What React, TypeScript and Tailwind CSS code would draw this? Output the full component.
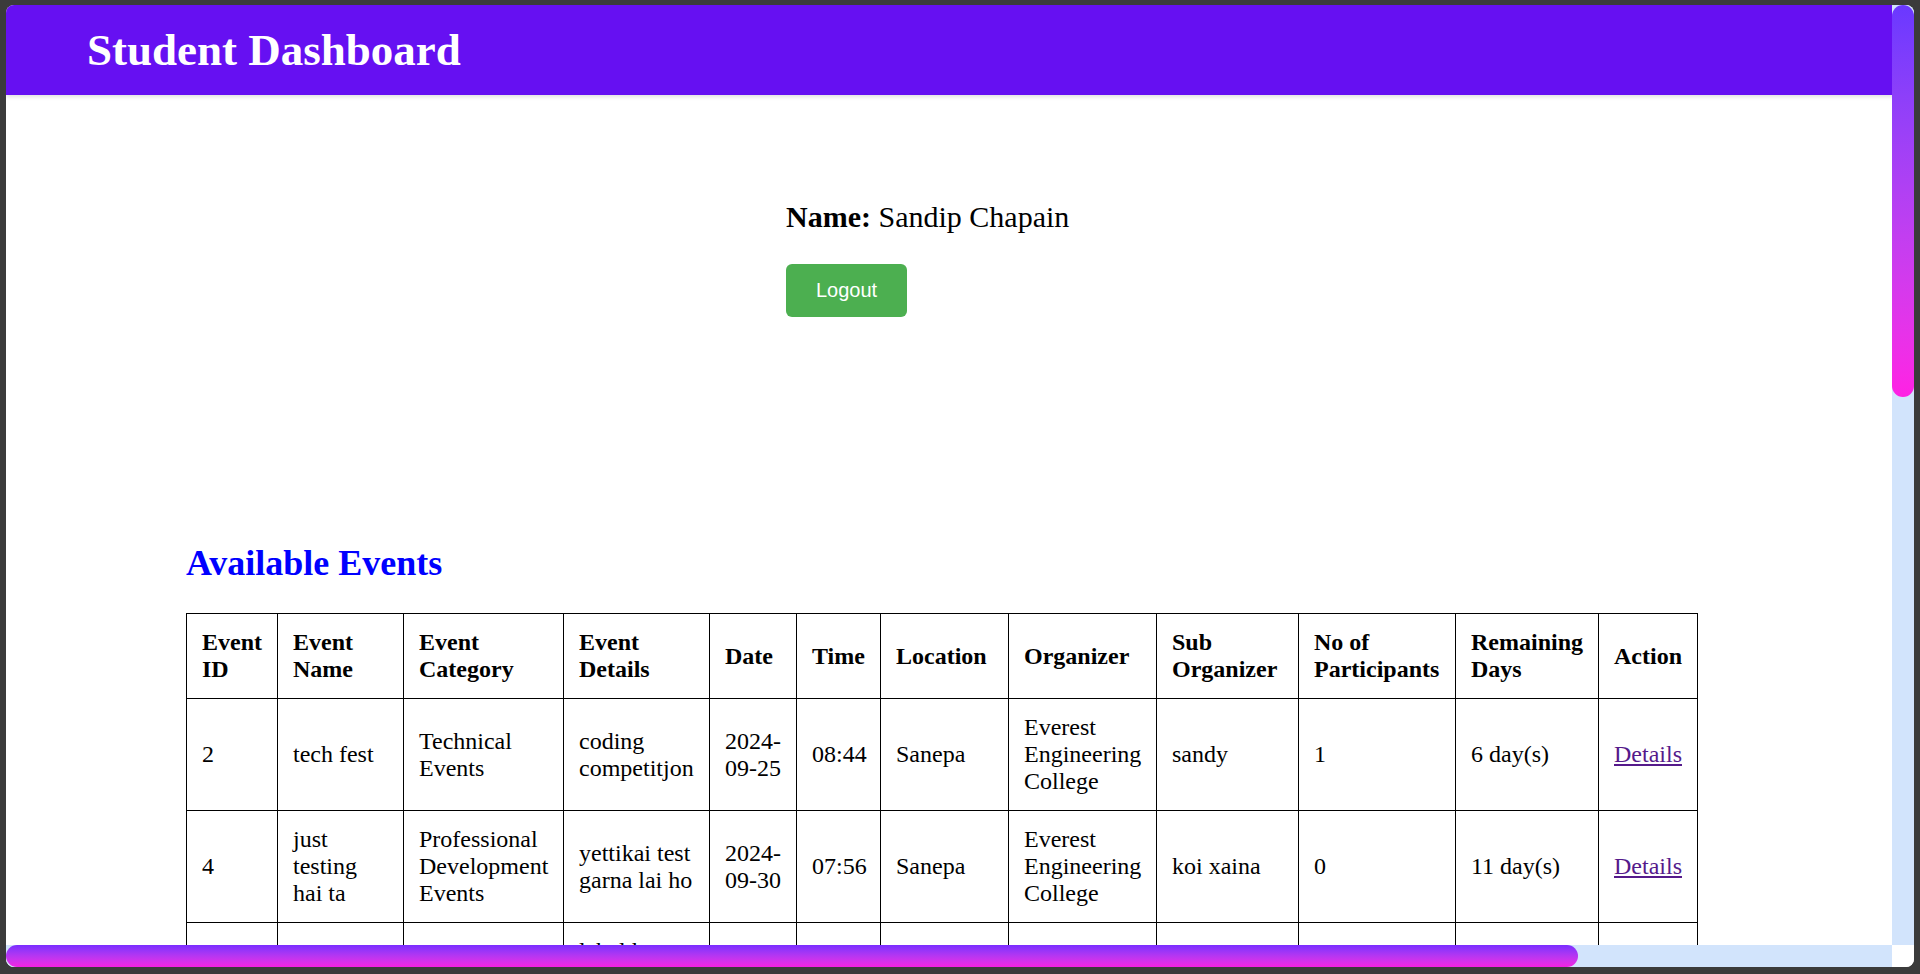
import React from "react";

type Ev = {
  id: string;
  name: string;
  category: string;
  details: string;
  date: string;
  time: string;
  location: string;
  organizer: string;
  sub: string;
  participants: string;
  remaining: string;
};

const events: Ev[] = [
  {
    id: "2",
    name: "tech fest",
    category: "Technical Events",
    details: "coding competitjon",
    date: "2024-09-25",
    time: "08:44",
    location: "Sanepa",
    organizer: "Everest Engineering College",
    sub: "sandy",
    participants: "1",
    remaining: "6 day(s)",
  },
  {
    id: "4",
    name: "just testing hai ta",
    category: "Professional Development Events",
    details: "yettikai test garna lai ho",
    date: "2024-09-30",
    time: "07:56",
    location: "Sanepa",
    organizer: "Everest Engineering College",
    sub: "koi xaina",
    participants: "0",
    remaining: "11 day(s)",
  },
  {
    id: "5",
    name: "hackathon",
    category: "Technical Events",
    details: "label kaam garne team haru ko lagi ho",
    date: "2024-10-04",
    time: "10:15",
    location: "Sanepa",
    organizer: "Everest Engineering College",
    sub: "sandy",
    participants: "0",
    remaining: "15 day(s)",
  },
  {
    id: "6",
    name: "sports week",
    category: "Sports Events",
    details: "football ra cricket",
    date: "2024-10-10",
    time: "09:00",
    location: "Sanepa",
    organizer: "Everest Engineering College",
    sub: "koi xaina",
    participants: "0",
    remaining: "21 day(s)",
  },
];

const headers = [
  "Event ID",
  "Event Name",
  "Event Category",
  "Event Details",
  "Date",
  "Time",
  "Location",
  "Organizer",
  "Sub Organizer",
  "No of Participants",
  "Remaining Days",
  "Action",
];

const widths = [91, 126, 160, 146, 87, 84, 128, 148, 142, 157, 143, 99];

const cell = "border border-black p-[15px] align-middle";

export default function App() {
  return (
    <div className="w-screen h-screen overflow-hidden bg-[#3b3b3b] pt-[5px] pl-[6px]">
      <div
        className="w-[1908px] h-[962px] rounded-[8px] overflow-hidden bg-white flex flex-col"
        style={{ fontFamily: '"Liberation Serif", "Times New Roman", serif' }}
      >
        <div className="flex h-[940px]">
          <div className="w-[1886px] h-full overflow-hidden">
            <div className="w-[2263px] text-black">
              <header className="h-[90px] bg-[#6610f2] flex items-center pl-[81px] shadow-[0_2px_4px_rgba(0,0,0,0.12)]">
                <h1 className="text-[45px] leading-[52px] font-bold text-white">
                  Student Dashboard
                </h1>
              </header>

              <section className="pl-[780px] pt-[104px]">
                <p className="text-[30px] leading-[35px]">
                  <strong className="font-bold">Name:</strong> Sandip Chapain
                </p>
                <button
                  className="block mt-[30px] bg-[#4caf50] text-white text-[20px] leading-[23px] px-[30px] py-[15px] rounded-[6px]"
                  style={{ fontFamily: '"Liberation Sans", Arial, sans-serif' }}
                >
                  Logout
                </button>
              </section>

              <section className="pl-[180px] pb-[40px]">
                <h2 className="mt-[226px] text-[36px] leading-[41px] font-bold text-[#0000ff]">
                  Available Events
                </h2>
                <table className="mt-[29px] w-[1511px] table-fixed border-collapse text-[24px] leading-[normal]">
                  <colgroup>
                    {widths.map((w, i) => (
                      <col key={i} style={{ width: w }} />
                    ))}
                  </colgroup>
                  <thead>
                    <tr>
                      {headers.map((h) => (
                        <th key={h} className={`${cell} text-left font-bold`}>
                          {h}
                        </th>
                      ))}
                    </tr>
                  </thead>
                  <tbody>
                    {events.map((e) => (
                      <tr key={e.id}>
                        <td className={cell}>{e.id}</td>
                        <td className={cell}>{e.name}</td>
                        <td className={cell}>{e.category}</td>
                        <td className={cell}>{e.details}</td>
                        <td className={cell}>{e.date}</td>
                        <td className={cell}>{e.time}</td>
                        <td className={cell}>{e.location}</td>
                        <td className={cell}>{e.organizer}</td>
                        <td className={cell}>{e.sub}</td>
                        <td className={cell}>{e.participants}</td>
                        <td className={cell}>{e.remaining}</td>
                        <td className={cell}>
                          <a href="#" className="text-[#551a8b] underline">
                            Details
                          </a>
                        </td>
                      </tr>
                    ))}
                  </tbody>
                </table>
              </section>
            </div>
          </div>
          <div className="w-[22px] h-full bg-[#d2e4fc]">
            <div className="w-full h-[392px] rounded-full bg-linear-to-b from-[#6a38ff] to-[#ff20e4]" />
          </div>
        </div>
        <div className="flex h-[22px]">
          <div className="w-[1886px] h-full bg-[#d2e4fc]">
            <div className="w-[1572px] h-full rounded-full bg-linear-to-b from-[#7a2cff] to-[#f41fe2]" />
          </div>
          <div className="w-[22px] h-full bg-white" />
        </div>
      </div>
    </div>
  );
}
